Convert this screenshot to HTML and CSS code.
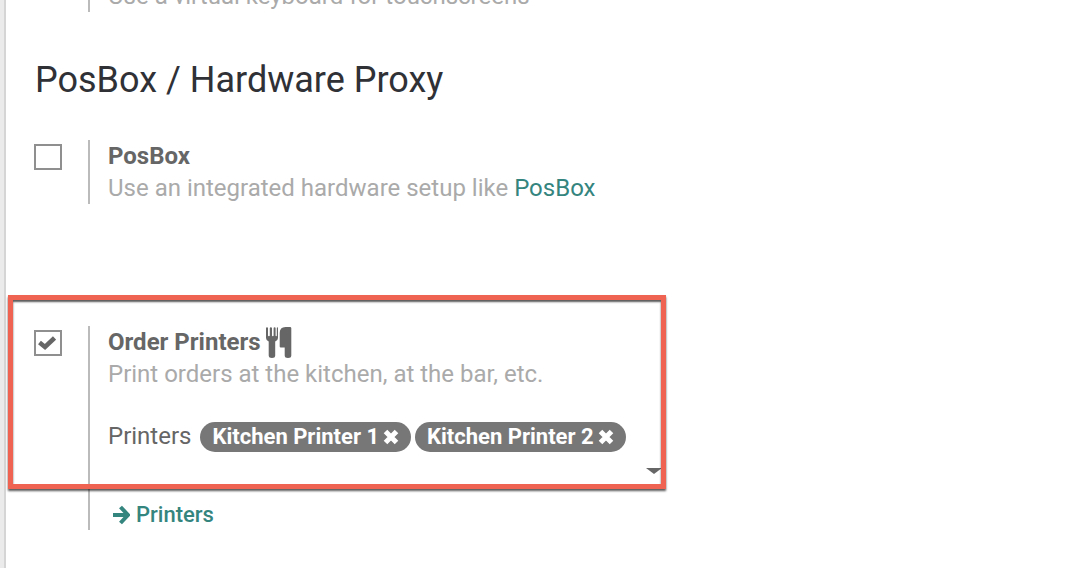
FILE: index.html
```html
<!DOCTYPE html>
<html lang="en">
<head>
<meta charset="utf-8">
<title>Point of Sale Settings</title>
<link rel="stylesheet" href="styles.css">
</head>
<body>
<main class="sheet">
  <section class="setting setting-scrolled">
    <div class="setting-body">
      <p class="description">Use a virtual keyboard for touchscreens</p>
    </div>
  </section>

  <h2 class="section-title">PosBox / Hardware Proxy</h2>

  <section class="setting">
    <input class="checkbox" type="checkbox" id="posbox">
    <div class="setting-body">
      <label class="name" for="posbox">PosBox</label>
      <p class="description">Use an integrated hardware setup like <a class="link" href="#posbox">PosBox</a></p>
    </div>
  </section>

  <section class="setting setting-printers">
    <input class="checkbox" type="checkbox" id="order-printers" checked>
    <div class="setting-body">
      <div class="name-row">
        <label class="name" for="order-printers">Order Printers</label>
        <svg class="cutlery" viewBox="0 0 26 32" aria-hidden="true">
          <path d="M0 1.2Q0 .2 1 .2T2 1.2V8.500Q2 9.300 2.900 9.300T3.800 8.500V1.200Q3.800.2 4.900.2T6 1.200V8.500Q6 9.300 6.800 9.300T7.600 8.500V1.200Q7.600.2 8.600.2T9.600 1.200V8.500Q9.600 9.300 10.200 9.300T10.800 8.500V1.200Q10.800.2 11.400.2T12 1.200V11Q12 13.500 9.200 14.400V28.500Q9.200 31 6 31T2.700 28.500V14.400Q0 13.500 0 11Z"/>
          <path d="M19.500 0H24Q25.300 0 25.300 1.300V28.500Q25.300 31 22 31T18.700 28.500V20.500H14.700Q13.700 20.500 13.700 19.500V6Q13.700 0 19.500 0Z"/>
        </svg>
      </div>
      <p class="description">Print orders at the kitchen, at the bar, etc.</p>
      <div class="field">
        <span class="field-label">Printers</span>
        <div class="tags">
          <span class="tag">Kitchen Printer 1
            <button class="remove" type="button" aria-label="Remove Kitchen Printer 1"><svg viewBox="0 0 16 16"><path d="M2.500 2.500L13.500 13.500M13.500 2.500L2.500 13.500"/></svg></button>
          </span>
          <span class="tag">Kitchen Printer 2
            <button class="remove" type="button" aria-label="Remove Kitchen Printer 2"><svg viewBox="0 0 16 16"><path d="M2.500 2.500L13.500 13.500M13.500 2.500L2.500 13.500"/></svg></button>
          </span>
        </div>
      </div>
      <button class="dropdown" type="button" aria-label="Choose printers"><svg viewBox="0 0 16 6"><path d="M0 0H16L8 6Z"/></svg></button>
      <a class="link action" href="#printers">
        <svg class="arrow" viewBox="0 0 18 20" aria-hidden="true"><path d="M1 10H15M8.500 2L16 10L8.500 18"/></svg>Printers</a>
    </div>
    <div class="highlight"></div>
  </section>
</main>
</body>
</html>
```
FILE: styles.css
```css
* {
  box-sizing: border-box;
}

body {
  margin: 0;
  background: #ebebeb;
  color: #666;
  font: 24px/32px Roboto, sans-serif;
  overflow: hidden;
}

.sheet {
  min-height: 100vh;
  margin-left: 4px;
  padding: 0 28px;
  border-left: 2px solid #d5d5d5;
  background: #fff;
  display: flow-root;
}

.section-title {
  margin: 44px 0 36px;
  padding-left: 1px;
  color: #2f3136;
  font-size: 36px;
  font-weight: 400;
  line-height: 48px;
}

.setting {
  position: relative;
  display: grid;
  grid-template-columns: 54px minmax(0, 574px);
}

/* The list is scrolled: only the end of this row is in view. */
.setting-scrolled {
  margin-top: -20px;
}

.setting-printers {
  margin-top: 122px;
}

.setting-body {
  grid-column: 2;
  padding-left: 18px;
  border-left: 2px solid #bbb;
}

.checkbox {
  appearance: none;
  width: 28px;
  height: 26px;
  margin: 4px 0 0;
  border: 2px solid #8f8f8f;
  background: #fff;
}

.checkbox:checked {
  background: #fff url("data:image/svg+xml,%3Csvg xmlns='http://www.w3.org/2000/svg' viewBox='0 0 18 14'%3E%3Cpath d='M1.500 6.500L7 11L16.500 2' fill='none' stroke='%23666' stroke-width='4.500'/%3E%3C/svg%3E") 2px 4px / 18px 14px no-repeat;
}

.name-row {
  display: flex;
  gap: 5px;
  height: 32px;
}

.name {
  display: block;
  font-weight: 700;
}

.cutlery {
  width: 26px;
  height: 32px;
  margin-top: 1px;
  fill: #666;
}

.description {
  margin: 0;
  color: #aaa;
}

.link {
  color: #35857f;
  text-decoration: none;
}

.field {
  display: flex;
  gap: 9px;
  margin-top: 30px;
}

.tags {
  display: flex;
  gap: 4px;
  padding-top: 2px;
}

.tag {
  display: flex;
  align-items: center;
  gap: 4px;
  height: 30px;
  padding: 0 12px;
  border-radius: 15px;
  background: #777;
  color: #fff;
  font-size: 22px;
  font-weight: 700;
  white-space: nowrap;
}

.remove {
  display: flex;
  padding: 0;
  border: 0;
  background: none;
}

.remove svg {
  width: 16px;
  height: 16px;
  fill: none;
  stroke: #fff;
  stroke-width: 5;
}

.dropdown {
  display: flex;
  margin: 16px 0 0 auto;
  padding: 0;
  border: 0;
  background: none;
}

.dropdown svg {
  width: 16px;
  height: 6px;
  fill: #666;
}

.action {
  display: flex;
  align-items: center;
  gap: 6px;
  margin-top: 26px;
  padding-left: 4px;
  font-size: 22px;
  font-weight: 500;
  line-height: 30px;
}

.arrow {
  width: 18px;
  height: 20px;
  fill: none;
  stroke: currentColor;
  stroke-width: 4;
}

.highlight {
  position: absolute;
  top: -31px;
  bottom: 41px;
  left: -26px;
  width: 658px;
  border: 5px solid #ee6352;
  box-shadow: 0 2px 2px rgba(0, 0, 0, .65), inset 0 2px 2px rgba(0, 0, 0, .65);
  pointer-events: none;
}
```
